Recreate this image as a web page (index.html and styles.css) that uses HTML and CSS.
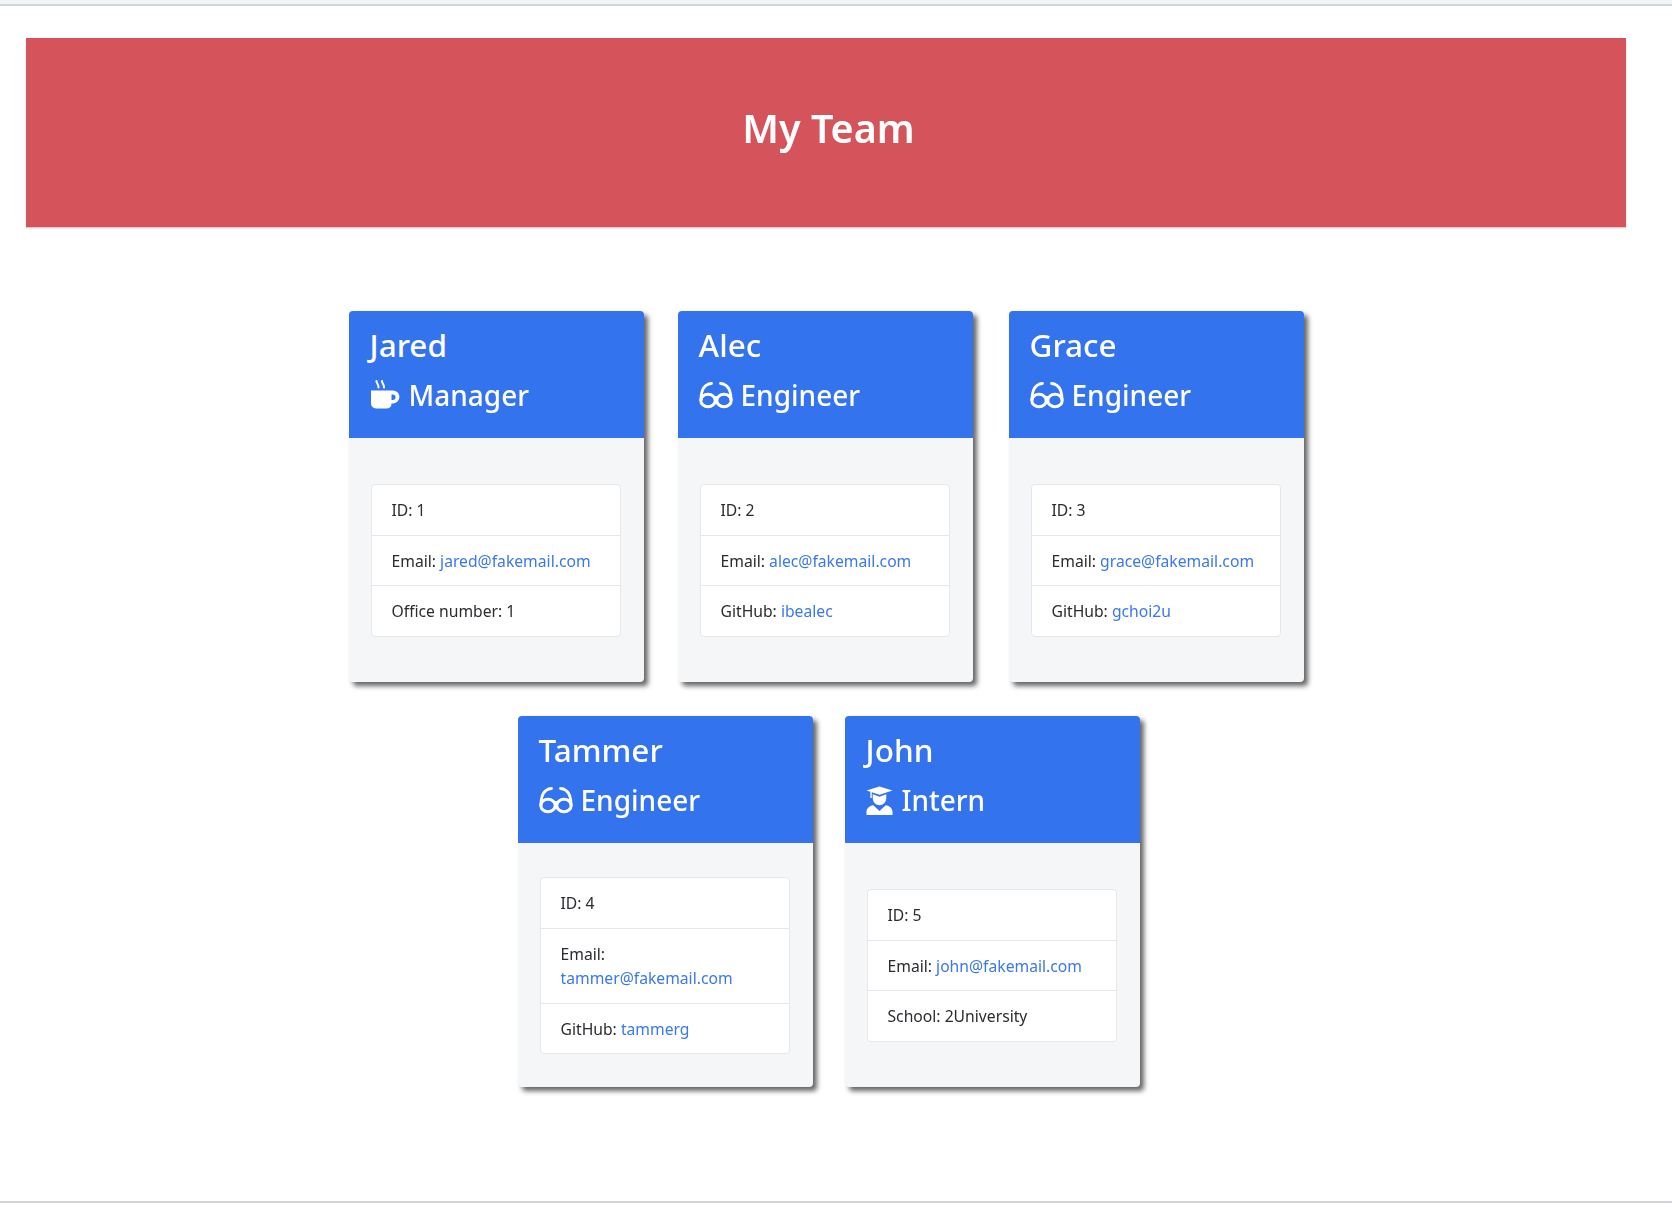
FILE: index.html
```html
<!DOCTYPE html>
<html lang="en">
<head>
<meta charset="utf-8">
<title>My Team</title>
<link rel="stylesheet" href="styles.css">
</head>
<body>
<svg class="sprite" aria-hidden="true">
  <symbol id="i-mug" viewBox="0 0 30 30">
    <path d="M6.500 1c-.3 2.300 2.400 3 1.900 6.500M12 1c-.3 2.300 2.400 3 1.900 6.500" fill="none" stroke="#fff" stroke-width="2" stroke-linecap="round"/>
    <path d="M1 10.500h21.500a6.500 6.500 0 0 1 .8 13h-1.800a5 5 0 0 1-4.500 5H6a5 5 0 0 1-5-5zM21.500 14.500v5.500h1.300a2.750 2.750 0 0 0 0-5.500z" fill="#fff" fill-rule="evenodd"/>
  </symbol>
  <symbol id="i-glasses" viewBox="0 0 34 28">
    <path d="M2 19C2 12 3.500 7 7 4.500 8.500 3.300 10.500 2.500 12.500 2.500M32 19C32 12 30.500 7 27 4.500 25.500 3.300 23.500 2.500 21.500 2.500" fill="none" stroke="#fff" stroke-width="2.800" stroke-linecap="round"/>
    <ellipse cx="9" cy="19.500" rx="7.200" ry="6.300" fill="none" stroke="#fff" stroke-width="3"/>
    <ellipse cx="25" cy="19.500" rx="7.200" ry="6.300" fill="none" stroke="#fff" stroke-width="3"/>
    <path d="M15.500 17c1-.8 2-.8 3 0" fill="none" stroke="#fff" stroke-width="2.600"/>
  </symbol>
  <symbol id="i-grad" viewBox="0 0 28 30">
    <path d="M14 .5 27.500 4.500 14 9 6 6.500V12.500H4.500V6L.5 4.500z" fill="#fff"/>
    <path d="M7 8.500 14 11l7-2.500V13a7 7 0 0 1-14 0z" fill="#fff"/>
    <path d="M7.500 20l6.500 6 6.500-6c4 .5 7 3.500 7 7v3H.5v-3c0-3.500 3-6.500 7-7z" fill="#fff"/>
  </symbol>
</svg>
<div class="top-strip"></div>
<header class="banner"><h1 class="banner-title">My Team</h1></header>
<main class="team">
  <div class="team-row team-row-first">
    <article class="card">
      <div class="card-head"><h2 class="name">Jared</h2>
        <h3 class="role"><svg class="icon"><use href="#i-mug"/></svg>Manager</h3></div>
      <div class="card-body"><ul class="facts">
        <li class="fact">ID: 1</li>
        <li class="fact">Email: <a class="link" href="#">jared@fakemail.com</a></li>
        <li class="fact">Office number: 1</li>
      </ul></div>
    </article>
    <article class="card">
      <div class="card-head"><h2 class="name">Alec</h2>
        <h3 class="role"><svg class="icon icon-glasses"><use href="#i-glasses"/></svg>Engineer</h3></div>
      <div class="card-body"><ul class="facts">
        <li class="fact">ID: 2</li>
        <li class="fact">Email: <a class="link" href="#">alec@fakemail.com</a></li>
        <li class="fact">GitHub: <a class="link" href="#">ibealec</a></li>
      </ul></div>
    </article>
    <article class="card card-spaced">
      <div class="card-head"><h2 class="name">Grace</h2>
        <h3 class="role"><svg class="icon icon-glasses"><use href="#i-glasses"/></svg>Engineer</h3></div>
      <div class="card-body"><ul class="facts">
        <li class="fact">ID: 3</li>
        <li class="fact">Email: <a class="link" href="#">grace@fakemail.com</a></li>
        <li class="fact">GitHub: <a class="link" href="#">gchoi2u</a></li>
      </ul></div>
    </article>
  </div>
  <div class="team-row">
    <article class="card">
      <div class="card-head"><h2 class="name">Tammer</h2>
        <h3 class="role"><svg class="icon icon-glasses"><use href="#i-glasses"/></svg>Engineer</h3></div>
      <div class="card-body"><ul class="facts">
        <li class="fact">ID: 4</li>
        <li class="fact">Email: <a class="link" href="#">tammer@fakemail.com</a></li>
        <li class="fact">GitHub: <a class="link" href="#">tammerg</a></li>
      </ul></div>
    </article>
    <article class="card">
      <div class="card-head"><h2 class="name">John</h2>
        <h3 class="role"><svg class="icon icon-grad"><use href="#i-grad"/></svg>Intern</h3></div>
      <div class="card-body"><ul class="facts">
        <li class="fact">ID: 5</li>
        <li class="fact">Email: <a class="link" href="#">john@fakemail.com</a></li>
        <li class="fact">School: 2University</li>
      </ul></div>
    </article>
  </div>
</main>
<div class="bottom-rule"></div>
</body>
</html>
```

FILE: styles.css
```css
* { box-sizing: border-box; }
html, body { margin: 0; padding: 0; }
body {
  height: 1209px;
  background: #fff;
  color: #2b2b30;
  font-family: "Noto Sans", "Open Sans", sans-serif;
  display: flex;
  flex-direction: column;
  overflow: hidden;
}
.sprite { width: 0; height: 0; position: absolute; }
.top-strip {
  height: 6px;
  background: #f3f4f6;
  border-bottom: 2px solid #cfd5d9;
}
.banner {
  margin: 32px 46px 0 26px;
  height: 189px;
  background: #d5545c;
  display: flex;
  align-items: center;
  justify-content: center;
  box-shadow: 0 1px 1px rgba(213, 84, 92, .35);
}
.banner-title {
  margin: 0 0 8px 5px;
  color: #fff;
  font-size: 39.500px;
  font-weight: 600;
  line-height: 1.2;
  filter: blur(.4px);
}
.team {
  margin-top: 84px;
  display: flex;
  flex-direction: column;
  gap: 34px;
  filter: blur(.45px);
}
.team-row {
  display: flex;
  justify-content: center;
  gap: 32px;
  padding-right: 15px;
}
.team-row-first { gap: 34px; padding-right: 20px; }
.card {
  width: 295px;
  height: 371px;
  display: flex;
  flex-direction: column;
  background: #f5f6f8;
  border-radius: 4px;
  box-shadow: 4px 4px 5px rgba(0, 0, 0, .6);
}
.card-spaced { margin-left: 2px; }
.card-head {
  height: 127px;
  padding: 14px 21px 0;
  background: #3473ee;
  color: #fff;
  border-radius: 4px 4px 0 0;
}
.name {
  margin: 0;
  font-size: 31.500px;
  font-weight: 550;
  line-height: 40px;
}
.role {
  margin: 12px 0 0;
  display: flex;
  align-items: center;
  font-size: 28px;
  font-weight: 550;
  line-height: 36px;
}
.icon { width: 30px; height: 30px; margin-right: 9px; flex: none; }
.icon-glasses { width: 34px; height: 28px; margin-right: 8px; }
.icon-grad { width: 27px; height: 29px; margin-right: 9px; }
.card-body {
  flex: 1;
  display: flex;
  flex-direction: column;
  justify-content: center;
  padding: 1px 23px 0 22px;
}
.facts {
  list-style: none;
  margin: 0;
  padding: 0;
  background: #fff;
  border: 1px solid #e6e7ea;
  border-radius: 4px;
}
.fact {
  padding: 13px 20px 12px;
  font-size: 15.700px;
  line-height: 24.500px;
  border-top: 1px solid #e6e7ea;
}
.fact:first-child { border-top: 0; }
.link { color: #3b78ea; text-decoration: none; }
.bottom-rule {
  margin-top: auto;
  margin-bottom: 6px;
  height: 2px;
  background: #d3d3da;
}
```
